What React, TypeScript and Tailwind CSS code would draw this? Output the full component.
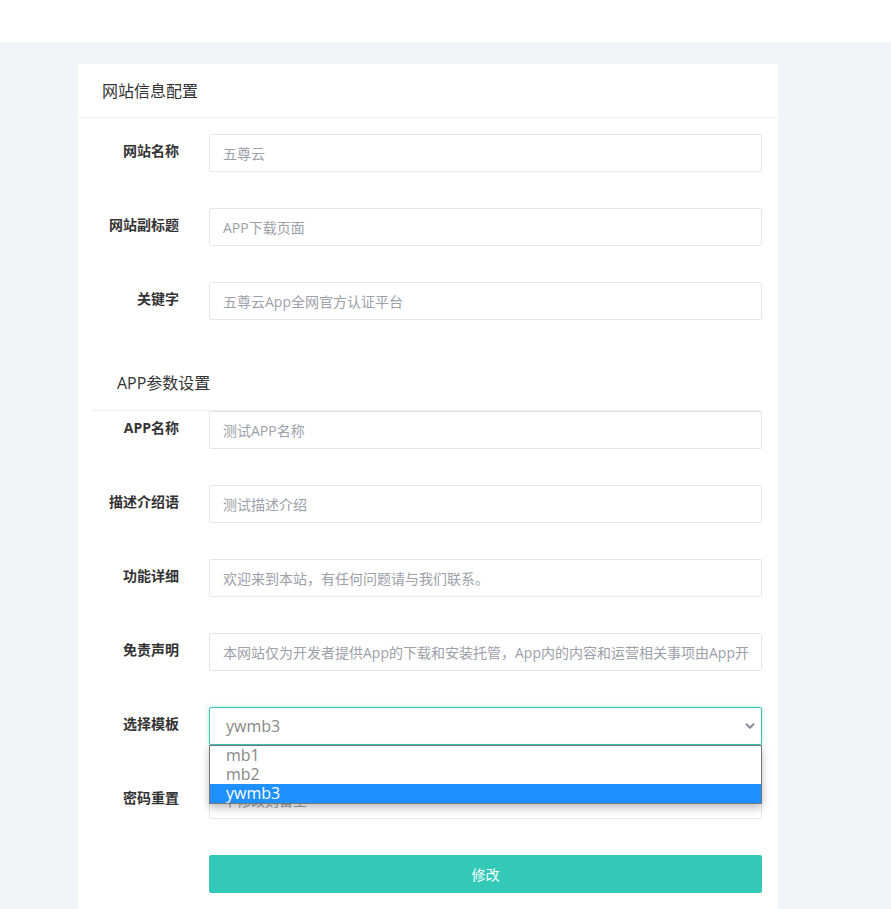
import React from 'react';

const font = { fontFamily: '"Segoe UI", "Open Sans", "Noto Sans CJK SC", sans-serif' };

function Row({ label, placeholder, children }: { label: string; placeholder?: string; children?: React.ReactNode }) {
  return (
    <div className="flex items-start gap-[30px] mb-[36px]">
      <label className="w-[101px] shrink-0 text-right text-[14px] leading-[20px] pt-[7px] font-bold text-[#333]">
        {label}
      </label>
      <div className="relative flex-1">
        {children ?? (
          <input
            className="w-full h-[38px] border border-[#e6e6e6] rounded-[2px] px-[13px] text-[14px] text-[#333] placeholder:text-[#9ca0a8] outline-none"
            placeholder={placeholder}
          />
        )}
      </div>
    </div>
  );
}

export default function App() {
  return (
    <div className="min-h-screen bg-[#f3f4f8]" style={font}>
      <div className="h-[42px] bg-white" />
      <div className="pt-[22px]">
        <div className="ml-[78px] w-[700px] bg-white pb-[20px]">
          <div className="h-[54px] flex items-center px-6 border-b border-[#f2f2f2] text-[16px] text-[#333]">
            网站信息配置
          </div>

          <div className="pt-[16px] pr-[16px]">
            <Row label="网站名称" placeholder="五尊云" />
            <Row label="网站副标题" placeholder="APP下载页面" />
            <Row label="关键字" placeholder="五尊云App全网官方认证平台" />

            <div className="ml-[15px] h-[55px] flex items-center pl-6 border-b border-[#eeeeee] text-[16px] text-[#333]">
              APP参数设置
            </div>

            <Row label="APP名称" placeholder="测试APP名称" />
            <Row label="描述介绍语" placeholder="测试描述介绍" />
            <Row label="功能详细" placeholder="欢迎来到本站，有任何问题请与我们联系。" />
            <Row label="免责声明" placeholder="本网站仅为开发者提供App的下载和安装托管，App内的内容和运营相关事项由App开发者负责，与本网站无关。" />
            <Row label="选择模板">
              <div className="h-[38px] border border-[#3cc5b4] rounded-[2px] shadow-[0_0_4px_rgba(60,197,180,0.45)] flex items-center justify-between pl-[16px] pr-[4px] text-[16px] text-[#888]">
                <span>ywmb3</span>
                <svg width="14" height="14" viewBox="0 0 24 24" fill="none" stroke="#8a8f99" strokeWidth="3.5" strokeLinecap="round" strokeLinejoin="round">
                  <path d="M6 9l6 6 6-6" />
                </svg>
              </div>
              <div className="absolute z-10 left-0 right-0 top-[38px] bg-white border border-[#767676] shadow-[0_4px_8px_rgba(0,0,0,0.25)] text-[16px] leading-[19px]">
                <div className="pl-[16px] text-[#888]">mb1</div>
                <div className="pl-[16px] text-[#888]">mb2</div>
                <div className="pl-[16px] bg-[#1e90ff] text-white">ywmb3</div>
              </div>
            </Row>
            <Row label="密码重置" placeholder="不修改则留空" />

            <div className="flex gap-[30px]">
              <div className="w-[101px] shrink-0" />
              <button className="flex-1 h-[38px] rounded-[2px] bg-[#33c9b9] text-white text-[14px]">修改</button>
            </div>
          </div>
        </div>
      </div>
    </div>
  );
}
